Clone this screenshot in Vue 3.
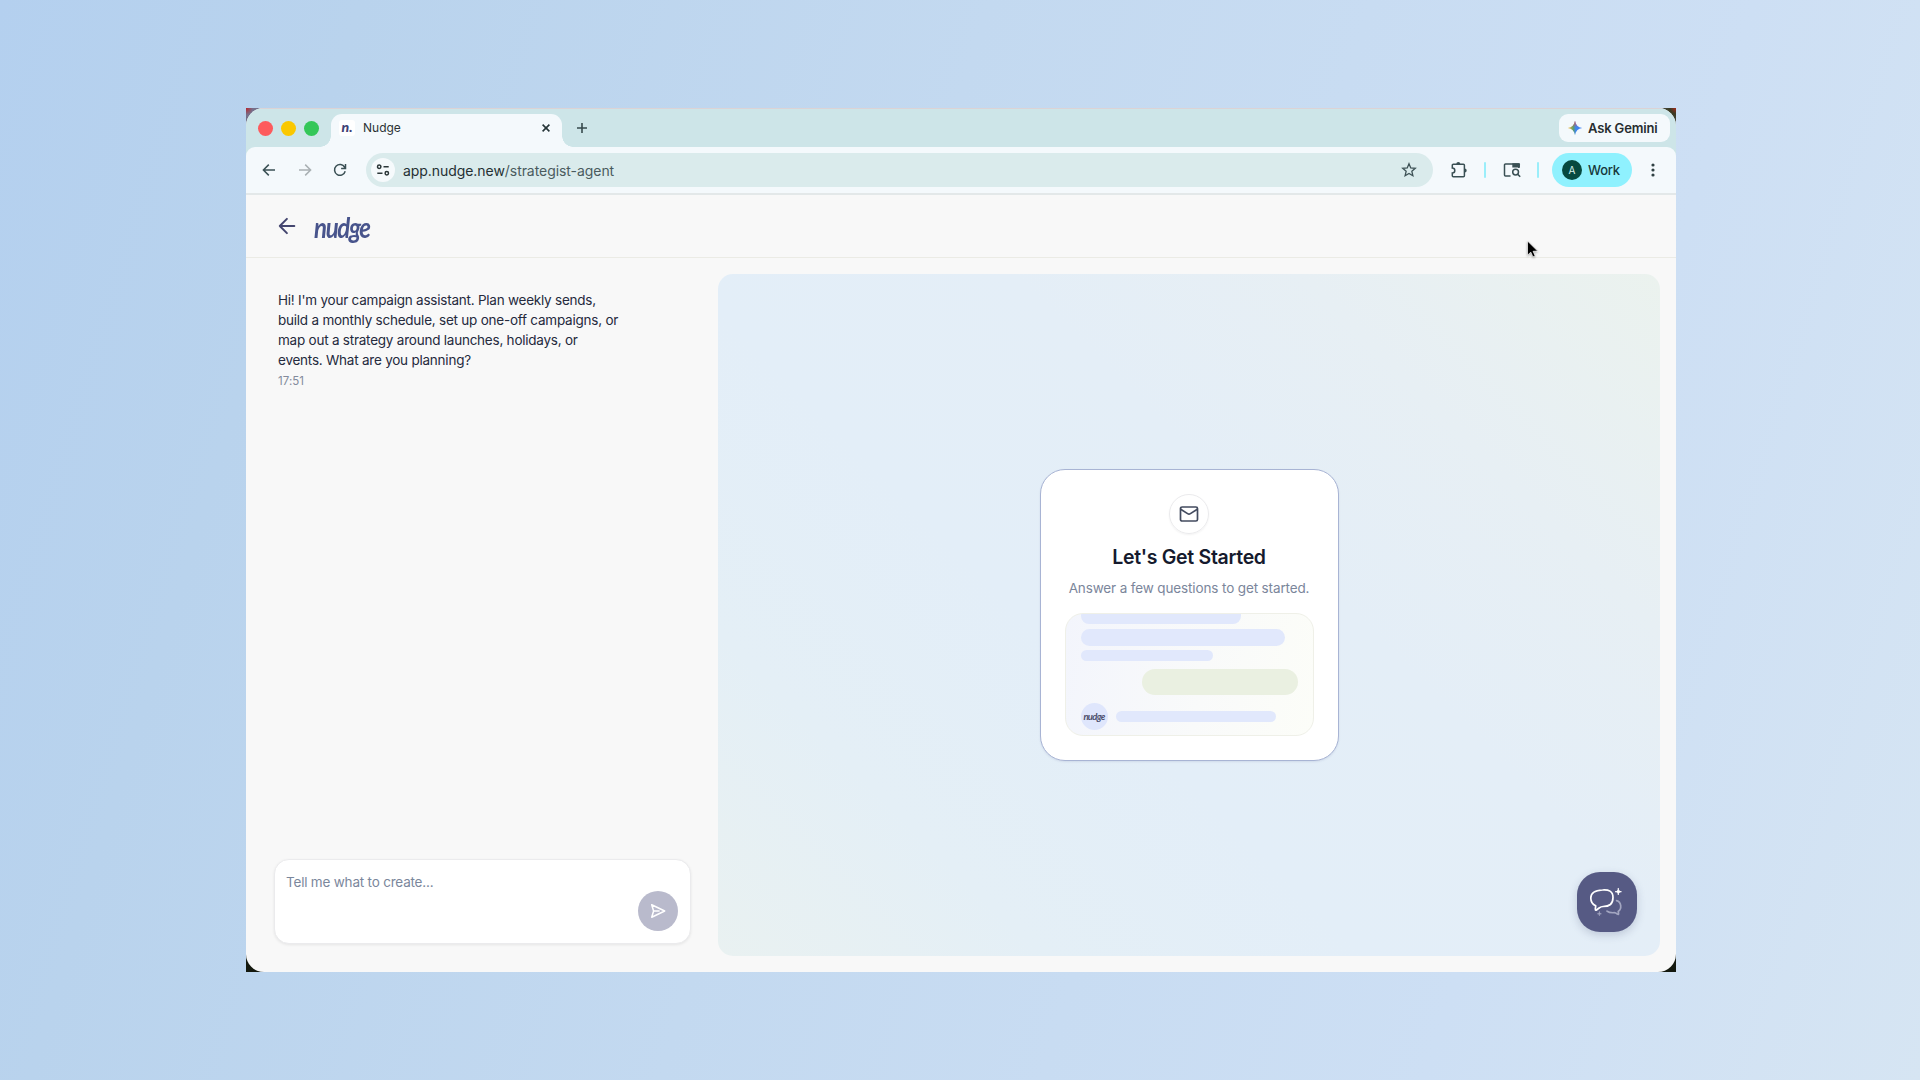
<template>
  <div class="stage">
    <div class="frame">
      <div class="window">
        <div class="tabstrip">
          <div class="lights">
            <span v-for="color in lights" :key="color" class="light" :class="color"></span>
          </div>
          <div class="tab">
            <span class="favicon">n.</span>
            <span class="tab-title">Nudge</span>
            <svg class="tab-close" width="10" height="10" viewBox="0 0 10 10"><path d="M1.6 1.6l6.8 6.8M8.4 1.6L1.6 8.4" /></svg>
          </div>
          <svg class="new-tab" width="12" height="12" viewBox="0 0 12 12"><path d="M6 1v10M1 6h10" /></svg>
          <button class="gemini">
            <svg width="16" height="16" viewBox="0 0 16 16">
              <defs>
                <linearGradient id="spark" x1="0" y1="8" x2="16" y2="8" gradientUnits="userSpaceOnUse">
                  <stop offset="0.1" stop-color="#f0b429" />
                  <stop offset="0.4" stop-color="#5a9c74" />
                  <stop offset="0.55" stop-color="#3f86f0" />
                  <stop offset="1" stop-color="#3b7df5" />
                </linearGradient>
                <linearGradient id="spark-top" x1="0" y1="0" x2="0" y2="8" gradientUnits="userSpaceOnUse">
                  <stop offset="0.1" stop-color="#e8484a" />
                  <stop offset="0.9" stop-color="#e8484a" stop-opacity="0" />
                </linearGradient>
              </defs>
              <path :d="sparkPath" fill="url(#spark)" />
              <path :d="sparkPath" fill="url(#spark-top)" />
            </svg>
            <span class="gemini-label">Ask Gemini</span>
          </button>
        </div>

        <div class="toolbar-wrap">
          <div class="toolbar">
            <div class="nav">
              <svg class="ico" width="14" height="14" viewBox="0 0 14 14"><path d="M13 7H1.5M6.8 1.6L1.4 7l5.4 5.4" /></svg>
              <svg class="ico muted" width="14" height="14" viewBox="0 0 14 14"><path d="M1 7h11.5M7.2 1.6L12.6 7l-5.4 5.4" /></svg>
              <svg class="ico" width="14" height="14" viewBox="0 0 14 14"><path d="M12.2 8.3A5.4 5.4 0 1 1 11.7 4.3M12.5 1v4.4H8.1" /></svg>
            </div>
            <div class="omnibox">
              <span class="site-info">
                <svg width="14" height="14" viewBox="0 0 14 14">
                  <circle cx="3.2" cy="3.8" r="1.7" /><path d="M7.5 3.8h5.2M1.3 10.2h5.2" /><circle cx="10.8" cy="10.2" r="1.7" />
                </svg>
              </span>
              <span class="url">app.nudge.new<span class="path">/strategist-agent</span></span>
              <svg class="star" width="16" height="16" viewBox="0 0 16 16"><path d="M8 1.7l1.75 4.2 4.55.4-3.45 3 1.03 4.45L8 11.4l-3.88 2.35 1.03-4.45-3.45-3 4.55-.4z" /></svg>
            </div>
            <svg class="ico puzzle" width="18" height="18" viewBox="0 0 18 18">
              <path d="M2.3 7V4.3a1 1 0 0 1 1-1H13.400a1 1 0 0 1 1 1V14.700a1 1 0 0 1-1 1H3.300a1 1 0 0 1-1-1V12a2.500 2.500 0 0 0 0-5z" />
              <path class="solid" d="M6.3 3a2 2 0 0 1 4 0zM14.700 7.500a2 2 0 0 1 0 4z" />
            </svg>
            <span class="divider"></span>
            <svg class="ico tabsearch" width="18" height="16" viewBox="0 0 18 16">
              <path d="M7.500 14H2.500a1 1 0 0 1-1-1V3a1 1 0 0 1 1-1h13.300v4" />
              <path class="solid" d="M9.300 1.300H16a.9.9 0 0 1 .9.9v3.300H9.300z" />
              <circle cx="12.600" cy="10.100" r="2.900" /><path d="M14.700 12.200l2.500 2.600" />
            </svg>
            <span class="divider"></span>
            <span class="profile"><span class="avatar">A</span><span class="profile-label">Work</span></span>
            <svg class="kebab" width="4" height="14" viewBox="0 0 4 14"><circle cx="2" cy="2" r="1.6" /><circle cx="2" cy="7" r="1.6" /><circle cx="2" cy="12" r="1.6" /></svg>
          </div>
        </div>

        <header class="app-header">
          <svg class="back" width="18" height="18" viewBox="0 0 18 18"><path d="M16.300 9H1.800M8.900 1.900L1.800 9l7.100 7.100" /></svg>
          <span class="logo">nudge</span>
        </header>

        <main class="content">
          <section class="chat">
            <div class="message">
              <p v-for="line in message" :key="line">{{ line }}</p>
              <time>17:51</time>
            </div>
            <div class="composer">
              <span class="placeholder">Tell me what to create...</span>
              <button class="send">
                <svg width="16" height="16" viewBox="0 0 16 16"><path d="M1.700 1.800L14.700 8 1.700 14.200 3.600 8zM3.600 8h6" /></svg>
              </button>
            </div>
          </section>

          <section class="canvas">
            <div class="card">
              <span class="mail">
                <svg width="20" height="18" viewBox="0 0 20 18"><rect x="1.500" y="2" width="17" height="14" rx="1.600" /><path d="M1.700 4.200l6.900 4.400a2.600 2.600 0 0 0 2.800 0l6.900-4.400" /></svg>
              </span>
              <h2>Let's Get Started</h2>
              <p class="subtitle">Answer a few questions to get started.</p>
              <div class="skeleton">
                <span class="bar first"></span>
                <span class="bar second"></span>
                <span class="bar third"></span>
                <span class="bar reply"></span>
                <div class="typing">
                  <span class="bot"><span class="bot-name">nudge</span></span>
                  <span class="bar last"></span>
                </div>
              </div>
            </div>
            <button class="assistant">
              <svg width="36" height="32" viewBox="0 0 36 32">
                <path d="M14.500 4C20.500 3.500 25 5 25 11.600c0 6.500-3.600 8.900-9.900 8.900-1.500 0-2.800.6-4 1.500l-2.600 2c-.7.500-1.400 0-1.200-.8l.4-3.400C4 18.200 2.800 15.600 2.800 12c0-5.600 4-7.600 11.700-8z" />
                <path class="star-lg" d="M30.300 2.600c.3 2.300.8 2.800 3.100 3.100-2.300.3-2.800.8-3.100 3.100-.3-2.300-.8-2.800-3.100-3.100 2.300-.3 2.800-.8 3.100-3.100z" />
                <path class="dim" d="M28.600 14.600c5 1.400 5.400 8.400 1.600 10.800l.4 2.300c.1.800-.5 1-1.100.5-1-.8-1.800-1.500-3.200-1.500-3.200.2-5.700-.2-7.300-1.600" />
                <path class="star-sm" d="M11.400 25.800c.3 1.400.6 1.700 2 2-1.400.3-1.700.6-2 2-.3-1.400-.6-1.700-2-2 1.400-.3 1.700-.6 2-2z" />
              </svg>
            </button>
          </section>
        </main>
      </div>
      <svg class="cursor" width="14" height="20" viewBox="0 0 14 20"><path d="M1.500 1v14.200l3.300-3 2.100 4.700 2.300-1-2.100-4.600 4.600-.2z" /></svg>
    </div>
  </div>
</template>

<script setup>
const lights = ['red', 'yellow', 'green']

const message = [
  "Hi! I'm your campaign assistant. Plan weekly sends,",
  'build a monthly schedule, set up one-off campaigns, or',
  'map out a strategy around launches, holidays, or',
  'events. What are you planning?',
]

const sparkPath = 'M8 .8C8.600 5 11 7.400 15.200 8 11 8.600 8.600 11 8 15.200 7.400 11 5 8.600.8 8 5 7.400 7.400 5 8 .8z'
</script>

<style>
body {
  margin: 0;
}
</style>

<style scoped>
.stage {
  width: 1920px;
  height: 1080px;
  display: flex;
  justify-content: center;
  box-sizing: border-box;
  padding: 108px 0;
  background: linear-gradient(107deg, #b4d0ef 0%, #b9d3ed 16%, #c3d9f0 44%, #cddff4 78%, #d6e5f3 100%);
  font-family: Inter, sans-serif;
  overflow: hidden;
}

.stage * {
  box-sizing: border-box;
}

button {
  border: 0;
  padding: 0;
  font: inherit;
}

svg {
  display: block;
  flex: none;
  fill: none;
}

/* dark wallpaper peeks out behind the rounded window corners */
.frame {
  position: relative;
  width: 1430px;
  height: 864px;
  margin-left: 2px;
  background:
    radial-gradient(circle at 0 0, #b8252c 0, #75708c 7px, transparent 26px),
    radial-gradient(circle at 100% 0, #a52a1c 0, #3a3a22 6px, transparent 26px),
    linear-gradient(#6b7289 0, #14190f 60px);
}

.window {
  height: 864px;
  display: flex;
  flex-direction: column;
  border-radius: 18px;
  overflow: hidden;
  background: #f8f8f8;
}

.tabstrip {
  display: flex;
  height: 39px;
  flex: none;
  background: #cde5e8;
  border-top: 1px solid #dcd3d5;
  padding: 0 6px 0 12px;
}

.lights {
  display: flex;
  gap: 8px;
  padding-top: 12px;
  width: 73px;
}

.light {
  width: 15px;
  height: 15px;
  border-radius: 50%;
}

.red { background: #fd5b5d; }
.yellow { background: #fac800; }
.green { background: #34c759; }

.tab {
  position: relative;
  display: flex;
  align-items: center;
  width: 231px;
  height: 33px;
  margin-top: 5px;
  padding: 0 11px 6px 8px;
  border-radius: 11px 11px 0 0;
  background: #f4f9fc;
}

/* flared feet of the active tab */
.tab::before,
.tab::after {
  content: '';
  position: absolute;
  bottom: 0;
  width: 11px;
  height: 11px;
}

.tab::before {
  left: -11px;
  background: radial-gradient(circle at 0 0, transparent 10.5px, #f4f9fc 11px);
}

.tab::after {
  right: -11px;
  background: radial-gradient(circle at 100% 0, transparent 10.5px, #f4f9fc 11px);
}

.favicon {
  width: 16px;
  height: 16px;
  border-radius: 3px;
  background: #fff;
  color: #3f4175;
  font: italic 900 14px/14px Lato, sans-serif;
  text-align: center;
}

.tab-title {
  flex: 1;
  margin-left: 8px;
  font-size: 12px;
  color: #2b3234;
}

.tab-close {
  stroke: #263538;
  stroke-width: 1.6;
}

.new-tab {
  margin: 13px 0 0 14px;
  stroke: #36494c;
  stroke-width: 1.6;
}

.gemini {
  display: flex;
  align-items: center;
  width: 111px;
  height: 28px;
  margin: 5px 0 0 auto;
  padding-left: 8px;
  gap: 5px;
  border-radius: 9px;
  background: #f4f9fc;
  color: #272d30;
  font-size: 13px;
  font-weight: 600;
  letter-spacing: -0.15px;
  white-space: nowrap;
}

.toolbar-wrap {
  flex: none;
  background: #cde5e8;
}

.toolbar {
  display: flex;
  align-items: center;
  height: 48px;
  padding: 0 21px 0 16px;
  background: #f4f9fc;
  border-bottom: 2px solid #e3e8e9;
  border-radius: 9px 9px 0 0;
}

.nav {
  display: flex;
  gap: 21.5px;
  width: 104px;
}

.ico {
  stroke: #3a5054;
  stroke-width: 1.5;
}

.ico.muted {
  stroke: #a9b0b3;
}

.solid {
  fill: #3a5054;
  stroke: none;
}

.omnibox {
  display: flex;
  align-items: center;
  width: 1067px;
  height: 34px;
  padding: 0 16px 0 5px;
  border-radius: 17px;
  background: #daebec;
}

.site-info {
  display: flex;
  align-items: center;
  justify-content: center;
  width: 24px;
  height: 24px;
  border-radius: 50%;
  background: #f6fafc;
}

.site-info svg {
  stroke: #2c3739;
  stroke-width: 1.5;
}

.url {
  flex: 1;
  margin-left: 8px;
  font-size: 14px;
  letter-spacing: -0.06px;
  color: #253033;
}

.path {
  color: #4a5b5e;
}

.star {
  stroke: #3e5256;
  stroke-width: 1.3;
}

.puzzle {
  margin-left: 17px;
}

.divider {
  width: 2px;
  height: 16px;
  margin-left: 16px;
  border-radius: 1px;
  background: #9aeefa;
}

.tabsearch {
  margin-left: 17px;
}

.profile {
  display: flex;
  align-items: center;
  gap: 6px;
  width: 80px;
  height: 34px;
  margin-left: 13px;
  padding-left: 10px;
  border-radius: 17px;
  background: #8ff1fe;
}

.avatar {
  width: 20px;
  height: 20px;
  border-radius: 50%;
  background: #06493f;
  color: #d8efe9;
  font-size: 10px;
  line-height: 20px;
  text-align: center;
}

.profile-label {
  font-size: 13px;
  font-weight: 500;
  letter-spacing: -0.2px;
  color: #17383b;
}

.kebab {
  margin-left: auto;
  fill: #304144;
}

.app-header {
  display: flex;
  align-items: center;
  flex: none;
  height: 63px;
  padding-left: 32px;
  border-bottom: 1px solid #ebebe5;
}

.back {
  stroke: #44466f;
  stroke-width: 2;
  stroke-linecap: round;
  stroke-linejoin: round;
}

.logo {
  margin: 2px 0 0 18px;
  color: #48548c;
  font: italic 700 25px/32px Lato, sans-serif;
  letter-spacing: -1.4px;
  transform: scale(0.96, 1.14);
  transform-origin: left;
}

.content {
  flex: 1;
  display: flex;
  gap: 28px;
  padding: 16px 16px 16px 28px;
}

.chat {
  width: 416px;
  display: flex;
  flex-direction: column;
  justify-content: space-between;
  padding: 16px 0 12px;
}

.message {
  padding-left: 4px;
  white-space: nowrap;
}

.message p {
  margin: 0;
  font-size: 13.5px;
  line-height: 20px;
  letter-spacing: -0.23px;
  color: #252a3d;
}

.message time {
  display: block;
  font-size: 11.5px;
  line-height: 22px;
  letter-spacing: 0.05px;
  color: #838b9c;
}

.composer {
  display: flex;
  width: 417px;
  height: 85px;
  justify-content: space-between;
  padding: 12px 12px 0 12px;
  border: 1px solid #ebebed;
  border-radius: 15px;
  background: #fff;
  box-shadow: 0 1px 3px rgba(0, 0, 0, 0.08);
}

.placeholder {
  margin-left: -1px;
  font-size: 13.5px;
  line-height: 20px;
  letter-spacing: -0.2px;
  color: #7b879c;
}

.send {
  display: flex;
  align-items: center;
  justify-content: center;
  width: 40px;
  height: 40px;
  margin-top: 19px;
  border-radius: 50%;
  background: #b9bacc;
}

.send svg {
  stroke: #fff;
  stroke-width: 1.5;
  stroke-linejoin: round;
}

.canvas {
  position: relative;
  flex: 1;
  display: flex;
  align-items: center;
  justify-content: center;
  border-radius: 15px;
  background: linear-gradient(45deg, #e9f1f1 0%, #e4eff6 20%, #e3eef8 40%, #e4eef7 60%, #e7eff4 78%, #ebf2ee 100%);
}

.card {
  display: flex;
  flex-direction: column;
  align-items: center;
  width: 299px;
  height: 292px;
  padding-top: 24px;
  border: 1px solid #a8b4d4;
  border-radius: 25px;
  background: #fff;
  box-shadow: 0 1px 2px rgba(72, 84, 140, 0.12);
}

.mail {
  display: flex;
  align-items: center;
  justify-content: center;
  flex: none;
  width: 40px;
  height: 40px;
  border: 1px solid #ebebed;
  border-radius: 50%;
  box-shadow: 0 1px 2px rgba(0, 0, 0, 0.05);
}

.mail svg {
  stroke: #434b5f;
  stroke-width: 1.7;
  stroke-linejoin: round;
}

h2 {
  margin: 9px 0 0;
  font-size: 19.5px;
  font-weight: 600;
  line-height: 28px;
  letter-spacing: -0.3px;
  white-space: nowrap;
  color: #151a2d;
}

.subtitle {
  margin: 7px 0 0;
  font-size: 13.5px;
  line-height: 20px;
  letter-spacing: -0.13px;
  white-space: nowrap;
  color: #7b869b;
}

.skeleton {
  display: flex;
  flex-direction: column;
  width: 249px;
  height: 123px;
  margin-top: 15px;
  padding-left: 15px;
  border: 1px solid #eff0e8;
  border-radius: 18px;
  overflow: hidden;
  background: linear-gradient(100deg, #f3f5fc, #f9fafa 55%, #fcfdf8);
}

.bar {
  flex: none;
  border-radius: 9px;
  background: #e1e8fc;
}

.first { width: 160px; height: 10px; border-radius: 0 0 8px 8px; }
.second { width: 204px; height: 17px; margin-top: 5px; }
.third { width: 132px; height: 11px; margin-top: 4px; }
.reply { width: 156px; height: 26px; margin: 8px 0 0 61px; border-radius: 13px; background: #eaf0e1; }
.last { width: 160px; height: 11px; }

.typing {
  display: flex;
  align-items: center;
  gap: 8px;
  margin-top: 8px;
}

.bot {
  display: flex;
  align-items: center;
  justify-content: center;
  width: 27px;
  height: 27px;
  border-radius: 50%;
  background: #dfe6fc;
}

.bot-name {
  color: #4b4e6c;
  font: italic 700 9.5px/12px Lato, sans-serif;
  letter-spacing: -0.7px;
}

.assistant {
  position: absolute;
  right: 23px;
  bottom: 24px;
  display: flex;
  align-items: center;
  justify-content: center;
  width: 60px;
  height: 60px;
  border-radius: 23px;
  background: #565a84;
  box-shadow: 0 3px 8px rgba(60, 70, 110, 0.22);
}

.assistant svg {
  margin-left: -3px;
  stroke: #fff;
  stroke-width: 1.7;
  stroke-linecap: round;
  stroke-linejoin: round;
}

.assistant .star-lg {
  fill: #fff;
  stroke-width: 0.9;
}

.assistant .dim {
  stroke: #a3a6c1;
}

.assistant .star-sm {
  fill: #a3a6c1;
  stroke: #a3a6c1;
  stroke-width: 0.6;
}

.cursor {
  position: absolute;
  left: 1280px;
  top: 132px;
  fill: #000;
  stroke: #fff;
  stroke-width: 0.7;
  filter: drop-shadow(0 1px 1px rgba(0, 0, 0, 0.3));
}
</style>
